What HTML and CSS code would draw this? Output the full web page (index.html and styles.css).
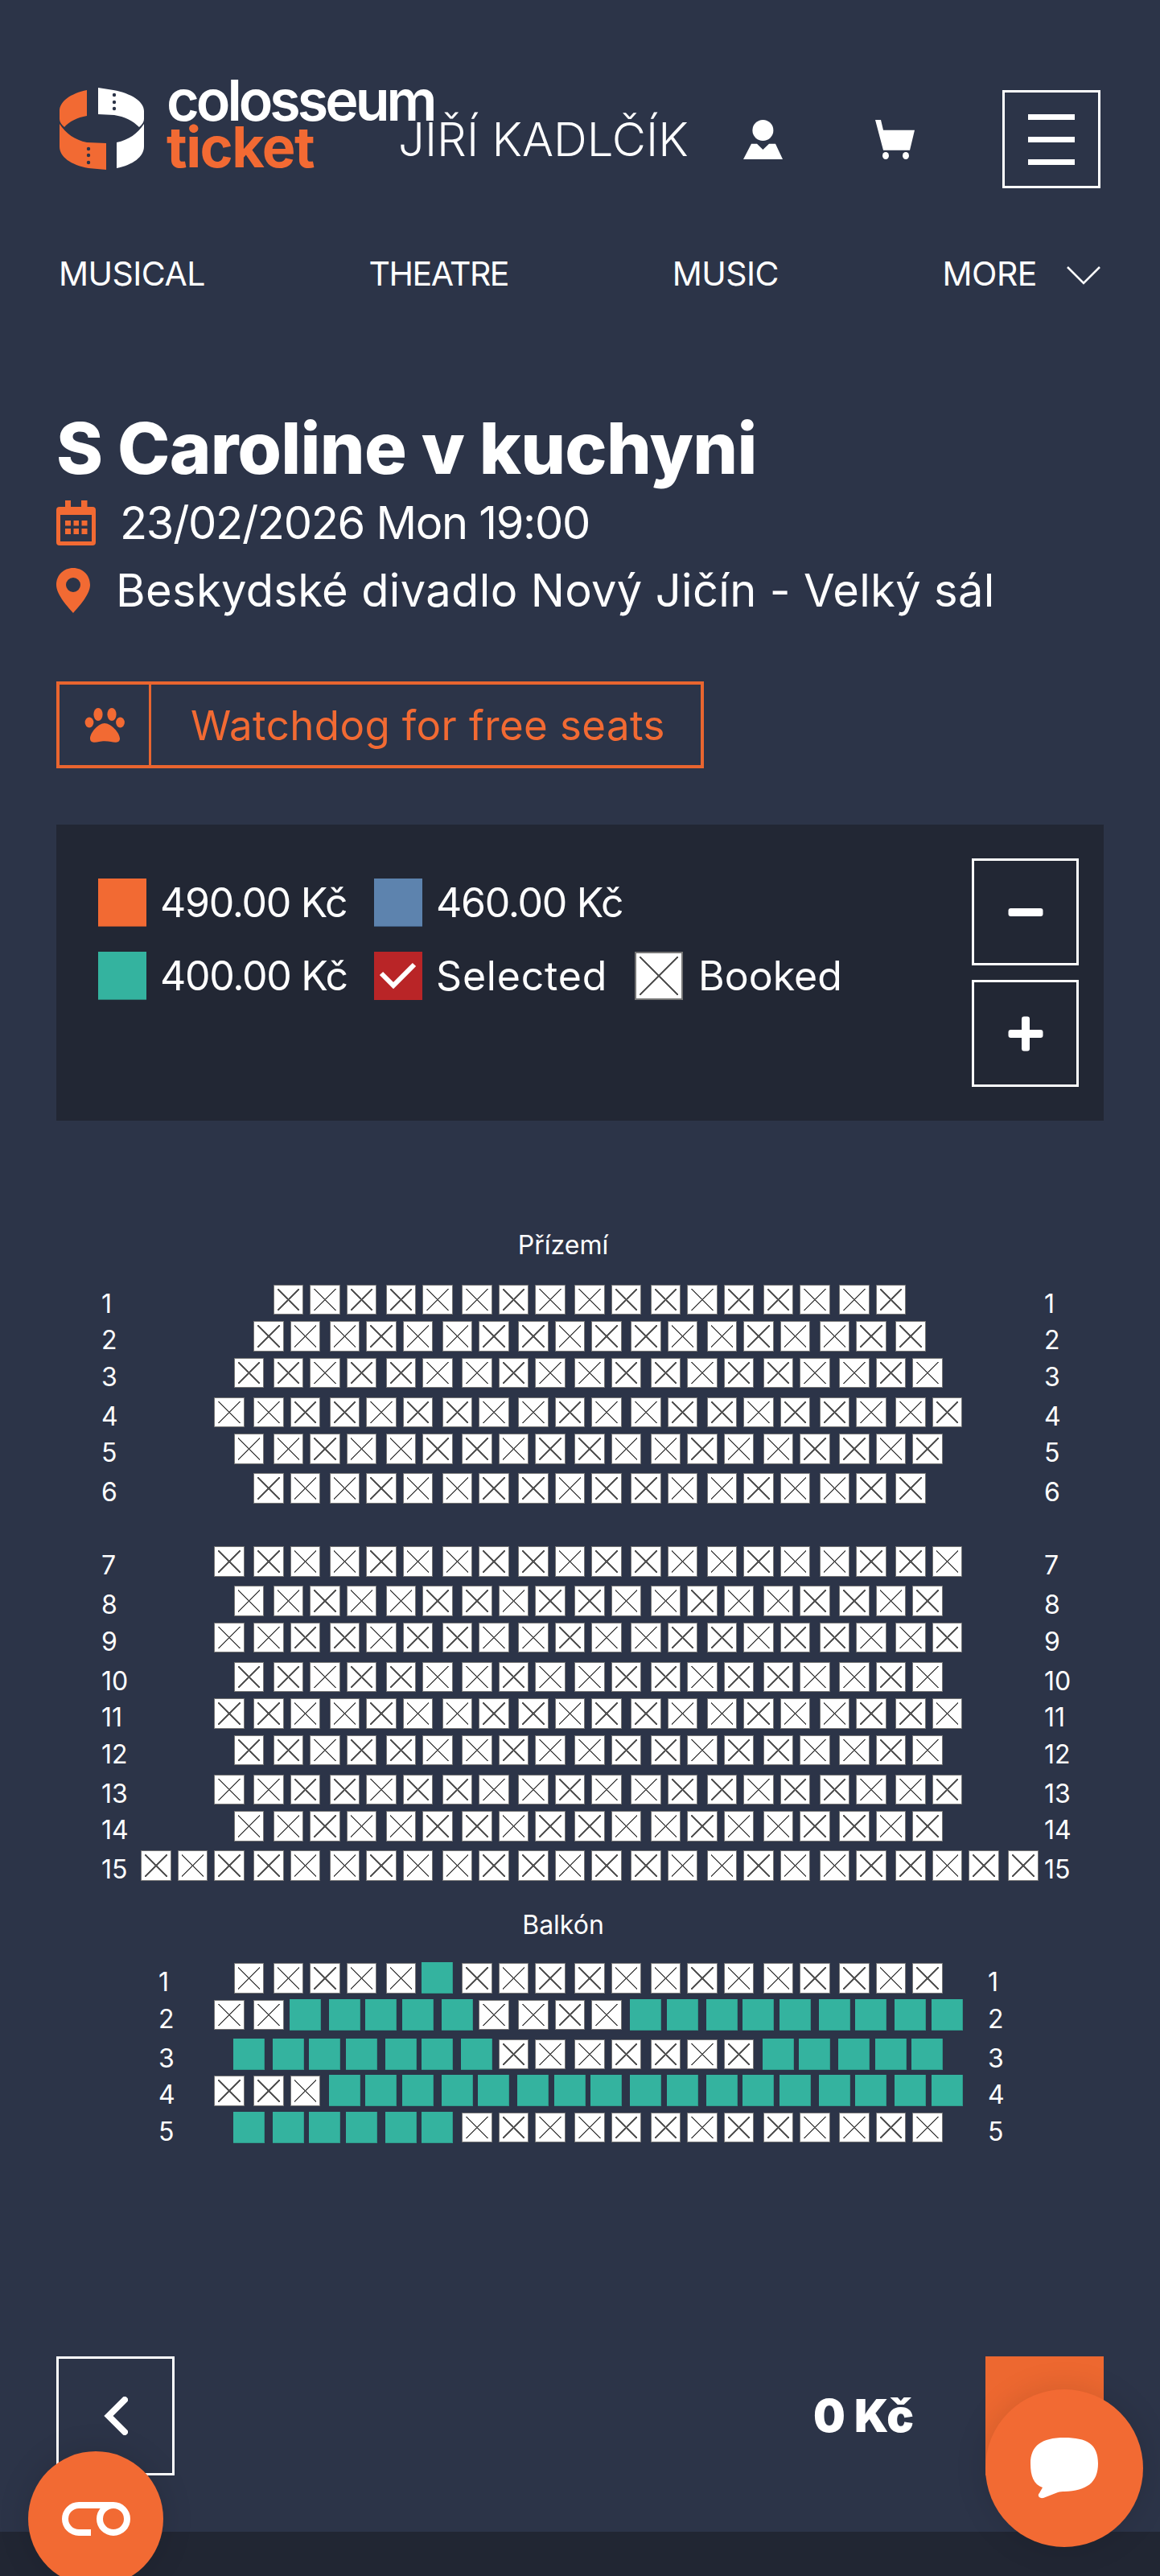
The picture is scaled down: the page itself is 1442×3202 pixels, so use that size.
FILE: index.html
```html
<!DOCTYPE html>
<html lang="cs">
<head>
<meta charset="utf-8">
<title>S Caroline v kuchyni</title>
<link rel="stylesheet" href="styles.css">
</head>
<body>
<header class="top">
  <a class="logo">
    <svg class="logo-mark" width="106" height="102" viewBox="0 0 106 102">
      <path fill="#f26a33" d="M35 3V35C23 37 13 42 7 49C3 46 1 42 1 39V29C1 17 15 7 35 3Z"/>
      <path fill="#fff" d="M49 0L68 3C90 7 106 17 106 29V39C106 42 104 46 100 49C92 41 82 36 69 34L49 33Z"/>
      <path fill="#f26a33" d="M1 45C9 57 20 65 35 68L59 69V102L37 100C15 96 1 86 1 73Z"/>
      <path fill="#fff" d="M106 45C98 57 87 65 72 68V100C92 96 106 86 106 73Z"/>
      <g fill="#2c3448">
        <circle cx="69" cy="9" r="2.2"/><circle cx="69" cy="18" r="2.2"/><circle cx="69" cy="26" r="2.2"/>
        <circle cx="37" cy="76" r="2.2"/><circle cx="37" cy="84" r="2.2"/><circle cx="37" cy="93" r="2.2"/>
      </g>
    </svg>
    <span class="logo-text"><span class="logo-top">colosseum</span><span class="logo-bottom">ticket</span></span>
  </a>
  <span class="user-name">JIŘÍ KADLČÍK</span>
  <svg class="icon-user" width="49" height="49" viewBox="0 0 49 49" fill="#fff">
    <ellipse cx="24.4" cy="13" rx="13" ry="13"/>
    <path d="M0 49L10 29.7H17L24.4 37L32 29.7H40L49 49Z"/>
  </svg>
  <svg class="icon-cart" width="49" height="49" viewBox="0 0 49 49" fill="#fff">
    <path d="M0 0H7L10 12.7H49L43 37.7H10Z"/>
    <ellipse cx="13" cy="44.5" rx="4" ry="4.5"/><ellipse cx="38" cy="44.5" rx="4" ry="4.5"/>
  </svg>
  <button class="menu-btn"><span></span><span></span><span></span></button>
</header>

<nav class="nav">
  <a>MUSICAL</a>
  <a class="nav-theatre">THEATRE</a>
  <a>MUSIC</a>
  <a class="nav-more">MORE
    <svg width="42" height="24" viewBox="0 0 42 24" fill="none" stroke="#fff" stroke-width="2.5"><path d="M1 2L21 22L41 2"/></svg>
  </a>
</nav>

<main>
  <section class="event">
    <h1>S Caroline v kuchyni</h1>
    <div class="event-row event-date">
      <svg width="49" height="56" viewBox="0 0 49 56">
        <path fill="#f26a33" d="M11 0H18V8H31V0H38.500V8H45A4 4 0 0 1 49 12V52A4 4 0 0 1 45 56H4A4 4 0 0 1 0 52V12A4 4 0 0 1 4 8H11Z"/>
        <rect x="5" y="18" width="39" height="33" fill="#2c3448"/>
        <g fill="#f26a33">
          <rect x="11" y="25" width="7" height="6.500"/><rect x="21.500" y="25" width="6.500" height="6.500"/><rect x="31.500" y="25" width="7" height="6.500"/>
          <rect x="11" y="35" width="7" height="7"/><rect x="21.500" y="35" width="6.500" height="7"/><rect x="31.500" y="35" width="7" height="7"/>
        </g>
      </svg>
      <span>23/02/2026 Mon 19:00</span>
    </div>
    <div class="event-row event-place">
      <svg width="42" height="56" viewBox="0 0 42 56">
        <path fill="#f26a33" fill-rule="evenodd" d="M21 0C33 0 42 9 42 21C42 32 30 46 21 56C12 46 0 32 0 21C0 9 9 0 21 0ZM21 12A9 9 0 1 0 21 30A9 9 0 1 0 21 12Z"/>
      </svg>
      <span>Beskydské divadlo Nový Jičín - Velký sál</span>
    </div>
  </section>

  <a class="watchdog">
    <span class="watchdog-icon">
      <svg width="50" height="43" viewBox="0 0 50 43" fill="#f26a33">
        <ellipse cx="6" cy="18" rx="5.400" ry="6.500"/>
        <ellipse cx="17" cy="8" rx="5.600" ry="8"/>
        <ellipse cx="34" cy="8" rx="5.600" ry="8"/>
        <ellipse cx="44.500" cy="18" rx="5.400" ry="6.500"/>
        <path d="M25 19C33 19 44 31 44 38C44 44 37 43 33 42C28 41 22 41 18 42C14 43 7 44 7 38C7 31 17 19 25 19Z"/>
      </svg>
    </span>
    <span class="watchdog-text">Watchdog for free seats</span>
  </a>

  <section class="legend">
    <div class="legend-items">
      <div class="legend-item legend-price"><span class="swatch swatch-orange"></span><span>490.00 Kč</span></div>
      <div class="legend-item legend-price"><span class="swatch swatch-blue"></span><span>460.00 Kč</span></div>
      <div></div>
      <div class="legend-item legend-price"><span class="swatch swatch-teal"></span><span>400.00 Kč</span></div>
      <div class="legend-item legend-selected"><span class="swatch swatch-red">
        <svg width="60" height="60" viewBox="0 0 60 60" fill="none" stroke="#fff" stroke-width="6"><path d="M9 27L24 42L50 16"/></svg>
      </span><span>Selected</span></div>
      <div class="legend-item legend-booked"><span class="swatch seat-booked"></span><span>Booked</span></div>
    </div>
    <div class="zoom-buttons">
      <button class="zoom-btn"><svg width="44" height="44" viewBox="0 0 44 44" fill="#fff"><rect x="0.500" y="17" width="43" height="10" rx="3"/></svg></button>
      <button class="zoom-btn"><svg width="44" height="44" viewBox="0 0 44 44" fill="#fff"><rect x="0.500" y="17" width="43" height="10" rx="3"/><rect x="17" y="0.500" width="10" height="43" rx="3"/></svg></button>
    </div>
  </section>

  <section class="seatmap" id="seatmap">
    <div class="map-title map-title-ground">Přízemí</div>
    <div class="map-title map-title-balcony">Balkón</div>
  </section>

  <section class="actions">
    <button class="back-btn"><svg width="30" height="48" viewBox="0 0 30 48" fill="none" stroke="#fff" stroke-width="8" stroke-linecap="round" stroke-linejoin="miter"><path d="M26 4L6 24L26 44"/></svg></button>
    <strong class="total">0 Kč</strong>
    <span class="next-btn"></span>
  </section>
</main>

<footer class="footer"></footer>

<div class="widget widget-left">
  <svg width="85" height="42" viewBox="0 0 85 42" fill="none" stroke="#fff" stroke-width="8">
    <path d="M36 38H21A17 17 0 0 1 21 4H64"/>
    <circle cx="64" cy="21" r="17"/>
  </svg>
</div>
<div class="widget widget-chat">
  <svg width="84" height="76" viewBox="0 0 84 76" fill="#fff">
    <path d="M42 0C70 0 84 8 84 32C84 56 70 66 42 67C40 67 36 67 34 68L16 75C11 76 8 72 11 69L15 62C4 58 0 48 0 32C0 10 14 0 42 0Z"/>
  </svg>
</div>
<script src="seatmap.js"></script>
</body>
</html>
```
FILE: styles.css
```css
* { box-sizing: border-box; }
html, body { margin: 0; padding: 0; }
body {
  background: #2c3448;
  color: #fff;
  font-family: Inter, "Liberation Sans", sans-serif;
  overflow: hidden;
}
button { background: none; padding: 0; cursor: pointer; }

.top {
  display: flex;
  align-items: center;
  padding: 112px 74px 0 73px;
}
.logo {
  display: flex;
  align-self: flex-start;
  width: 422px;
  height: 110px;
  margin-top: -12px;
}
.logo-mark { margin-top: 9px; flex: none; }
.logo-text {
  display: flex;
  flex-direction: column;
  margin: -4px 0 0 28px;
  font-size: 70px;
  line-height: 58px;
}
.logo-top { font-weight: 600; letter-spacing: -4px; white-space: nowrap; }
.logo-bottom { font-weight: 700; color: #f26a33; letter-spacing: -1.500px; }
.user-name { font-size: 58px; font-weight: 300; letter-spacing: 0; white-space: nowrap; width: 365px; flex: none; }
.icon-user { margin-left: 64px; flex: none; }
.icon-cart { margin-left: 115px; flex: none; }
.menu-btn {
  margin-left: 109px;
  width: 122px;
  height: 122px;
  flex: none;
  border: 3px solid #fff;
  display: flex;
  flex-direction: column;
  align-items: center;
  justify-content: center;
  gap: 21px;
}
.menu-btn span { display: block; width: 58px; height: 7px; background: #fff; }

.nav {
  display: flex;
  justify-content: space-between;
  margin-top: 76px;
  padding: 0 74px 0 73px;
  font-size: 41px;
  line-height: 60px;
  letter-spacing: -0.500px;
}
.nav-theatre { letter-spacing: -1.500px; }
.nav-more { display: flex; align-items: center; gap: 37px; }
.nav-more svg { margin-top: 4px; }

.event { padding: 0 70px; margin-top: 137px; }
h1 {
  margin: 0;
  font-size: 88px;
  line-height: 100px;
  font-weight: 800;
  letter-spacing: -0.700px;
}
.event-row { display: flex; align-items: center; height: 60px; font-size: 56px; font-weight: 400; white-space: nowrap; }
.event-date { margin-top: 13px; gap: 30px; letter-spacing: -1.300px; }
.event-place { margin-top: 24px; gap: 32px; letter-spacing: 0.350px; }

.watchdog {
  display: flex;
  align-items: center;
  width: 805px;
  height: 108px;
  margin: 83px 0 0 70px;
  border: 4px solid #e9652f;
  color: #f26a33;
}
.watchdog-icon {
  display: flex;
  align-items: center;
  justify-content: center;
  flex: none;
  width: 114px;
  height: 100%;
  border-right: 3px solid #e9652f;
}
.watchdog-text { margin-left: 49px; font-size: 51px; letter-spacing: 0.400px; white-space: nowrap; }

.legend {
  display: flex;
  justify-content: space-between;
  height: 368px;
  margin: 70px 70px 0;
  padding: 42px 31px 0 52px;
  background: #222734;
}
.legend-items {
  display: grid;
  grid-template-columns: 343px 324px auto;
  grid-auto-rows: 60px;
  row-gap: 31px;
  margin-top: 25px;
  font-size: 50px;
}
.legend-item { display: flex; align-items: center; gap: 17px; white-space: nowrap; }
.legend-price { letter-spacing: -1.300px; }
.legend-selected { letter-spacing: 0.800px; }
.legend-booked { gap: 19px; }
.swatch { display: block; flex: none; width: 60px; height: 60px; position: relative; }
.swatch svg { display: block; }
.swatch-orange { background: #f26a33; border-bottom: 1px solid #a24e30; }
.swatch-blue { background: #5d83ae; border-bottom: 1px solid #3f5f85; }
.swatch-teal { background: #34b39f; border-bottom: 1px solid #2d7f75; }
.swatch-red { background: #b92527; }
.zoom-buttons { display: flex; flex-direction: column; gap: 18px; }
.zoom-btn {
  display: flex;
  align-items: center;
  justify-content: center;
  width: 133px;
  height: 133px;
  border: 3px solid #fff;
}

.seatmap { position: relative; height: 1500px; }
.seat { position: absolute; }
.seat-free {
  width: 39px;
  height: 39px;
  margin: -1px 0 0 -1px;
  background: #34b39f;
  border: 1px solid #2f9b8b;
  border-width: 0 1px 1px 0;
}
.seat-booked {
  width: 37.500px;
  height: 37.500px;
  background: #fff;
  border: 1px solid #777;
}
.swatch.seat-booked { width: 60px; height: 60px; border-width: 2px; }
.seat-booked::after {
  content: "";
  position: absolute;
  inset: 4px;
  background:
    linear-gradient(45deg, transparent calc(50% - 0.8px), #555 calc(50% - 0.8px), #555 calc(50% + 0.8px), transparent calc(50% + 0.8px)),
    linear-gradient(-45deg, transparent calc(50% - 0.8px), #555 calc(50% - 0.8px), #555 calc(50% + 0.8px), transparent calc(50% + 0.8px));
}
.row-label { position: absolute; font-size: 32px; line-height: 40px; }
.map-title { position: absolute; left: 0; right: 42px; text-align: center; font-size: 32px; line-height: 40px; }
.map-title-ground { top: 135px; }
.map-title-balcony { top: 980px; }

.actions {
  display: flex;
  align-items: center;
  margin-top: 36px;
  padding: 0 70px;
}
.back-btn {
  display: flex;
  align-items: center;
  justify-content: center;
  width: 147px;
  height: 148px;
  border: 3px solid #fff;
}
.total { margin-left: auto; margin-right: 89px; font-size: 56px; font-weight: 900; white-space: nowrap; }
.next-btn { display: block; width: 147px; height: 148px; background: #ed6830; }

.footer { height: 55px; margin-top: 70px; background: #212633; }

.widget {
  position: fixed;
  display: flex;
  align-items: center;
  justify-content: center;
  border-radius: 50%;
  background: #f26a33;
  box-shadow: 0 0 40px rgba(0, 0, 0, 0.12);
}
.widget-left { left: 35px; bottom: -13px; width: 168px; height: 168px; }
.widget-chat { right: 21px; bottom: 36px; width: 196px; height: 196px; }
```
FILE: seatmap.js
```js
var UNIT = 3.5;
var MAP_TOP = 1393;
var map = document.getElementById('seatmap');

function col(n) { return 0.4 + UNIT * Math.ceil((760 + 67 * n) / 10); }
function rowY(u) { return 0.5 + UNIT * u - MAP_TOP; }

function add(cls, left, top, text) {
  var el = document.createElement('div');
  el.className = cls;
  el.style.left = left + 'px';
  el.style.top = top + 'px';
  if (text) el.textContent = text;
  map.appendChild(el);
}

function drawRow(label, u, first, last, labelLeft, labelRight, free) {
  var top = rowY(u);
  add('row-label', labelLeft, top + 4, String(label));
  add('row-label', labelRight, top + 4, String(label));
  var i = 0;
  for (var n = first; n <= last; n += 2, i++) {
    var isFree = free && free.indexOf(i) !== -1;
    add('seat ' + (isFree ? 'seat-free' : 'seat-booked'), col(n), top);
  }
}

function range(a, b) { var r = []; for (var i = a; i <= b; i++) r.push(i); return r; }

var ground = [
  [456, 3, 35], [469, 2, 36], [482, 1, 37], [496, 0, 38], [509, 1, 37], [523, 2, 36],
  [549, 0, 38], [563, 1, 37], [576, 0, 38], [590, 1, 37], [603, 0, 38], [616, 1, 37],
  [630, 0, 38], [643, 1, 37], [657, -4, 42]
];
ground.forEach(function (r, i) { drawRow(i + 1, r[0], r[1], r[2], 126, 1298); });

var balcony = [
  [697, 1, 37, [5]],
  [710, 0, 38, range(2, 6).concat(range(11, 19))],
  [724, 1, 37, range(0, 6).concat(range(14, 18))],
  [737, 0, 38, range(3, 19)],
  [750, 1, 37, range(0, 5)]
];
balcony.forEach(function (r, i) { drawRow(i + 1, r[0], r[1], r[2], 197, 1228, r[3]); });
```
